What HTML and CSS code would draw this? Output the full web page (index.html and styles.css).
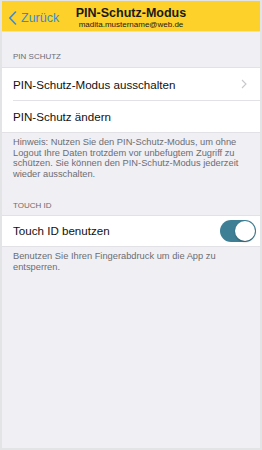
FILE: index.html
```html
<!DOCTYPE html>
<html lang="de">
<head>
<meta charset="utf-8">
<link rel="stylesheet" href="styles.css">
</head>
<body>
<div class="screen">
  <header class="navbar">
    <div class="back">
      <svg class="back-icon" width="9" height="14" viewBox="0 0 9 14"><path d="M7.5 1 L1.8 7 L7.5 13" fill="none" stroke="#3b8ad9" stroke-width="1.6" stroke-linecap="round" stroke-linejoin="round"/></svg>
      <span>Zurück</span>
    </div>
    <div class="title">
      <div class="title-main">PIN-Schutz-Modus</div>
      <div class="title-sub">madita.mustername@web.de</div>
    </div>
  </header>

  <div class="section-header first">PIN SCHUTZ</div>
  <div class="group">
    <div class="row">
      <span class="row-label">PIN-Schutz-Modus ausschalten</span>
      <svg class="chevron" width="6" height="10" viewBox="0 0 6 10"><path d="M1 1 L5 5 L1 9" fill="none" stroke="#c7c7cc" stroke-width="1.1"/></svg>
    </div>
    <div class="row sep">
      <span class="row-label">PIN-Schutz ändern</span>
    </div>
  </div>
  <div class="section-footer">Hinweis: Nutzen Sie den PIN-Schutz-Modus, um ohne Logout Ihre Daten trotzdem vor unbefugtem Zugriff zu schützen. Sie können den PIN-Schutz-Modus jederzeit wieder ausschalten.</div>

  <div class="section-header">TOUCH ID</div>
  <div class="group">
    <div class="row touch">
      <span class="row-label">Touch ID benutzen</span>
      <div class="toggle"><div class="knob"></div></div>
    </div>
  </div>
  <div class="section-footer">Benutzen Sie Ihren Fingerabdruck um die App zu entsperren.</div>
</div>
</body>
</html>
```
FILE: styles.css
```css
html, body {
  margin: 0;
  padding: 0;
}
body {
  background: #e3e4e6;
  width: 262px;
  height: 450px;
  padding: 1px 2px 2px 2px;
  box-sizing: border-box;
  font-family: "Liberation Sans", Arial, sans-serif;
}
.screen {
  background: #efeff4;
  height: 447px;
  overflow: hidden;
}
.navbar {
  height: 31px;
  background: #fdd12a;
  border-bottom: 1px solid #dde1e8;
  position: relative;
  display: flex;
  align-items: flex-end;
  justify-content: center;
  box-sizing: border-box;
  padding-bottom: 1px;
}
.back {
  position: absolute;
  left: 6px;
  top: 10px;
  display: flex;
  align-items: center;
  gap: 4px;
  color: #3b8ad9;
  font-size: 12.5px;
}
.back-icon {
  display: block;
}
.title {
  text-align: center;
  color: #1a1a1a;
}
.title-main {
  font-weight: bold;
  font-size: 12.5px;
  line-height: 14px;
}
.title-sub {
  font-size: 8px;
  line-height: 10px;
}
.section-header {
  font-size: 8px;
  color: #6d6d72;
  padding: 15px 11px 4px;
  line-height: 10px;
}
.section-header.first {
  padding-top: 20px;
  padding-bottom: 5px;
}
.group {
  background: #fff;
  border-top: 1px solid #e2e2e6;
  border-bottom: 1px solid #e2e2e6;
}
.row {
  height: 32px;
  display: flex;
  align-items: center;
  justify-content: space-between;
  padding: 0 4px 0 11px;
  font-size: 11.6px;
  color: #111;
  position: relative;
}
.row.touch {
  height: 30px;
}
.row.sep::before {
  content: "";
  position: absolute;
  left: 11px;
  right: 0;
  top: 0;
  border-top: 1px solid #e2e2e6;
}
.chevron {
  margin-right: 9px;
}
.toggle {
  width: 36px;
  height: 22px;
  border-radius: 11px;
  background: #3f7f95;
  position: relative;
}
.knob {
  position: absolute;
  right: 1px;
  top: 1px;
  width: 20px;
  height: 20px;
  border-radius: 50%;
  background: #fff;
  box-shadow: 0 1px 2px rgba(0,0,0,0.3);
}
.section-footer {
  font-size: 9.3px;
  color: #6d6d72;
  line-height: 10.7px;
  padding: 4px 16px 6px 11px;
}
```
